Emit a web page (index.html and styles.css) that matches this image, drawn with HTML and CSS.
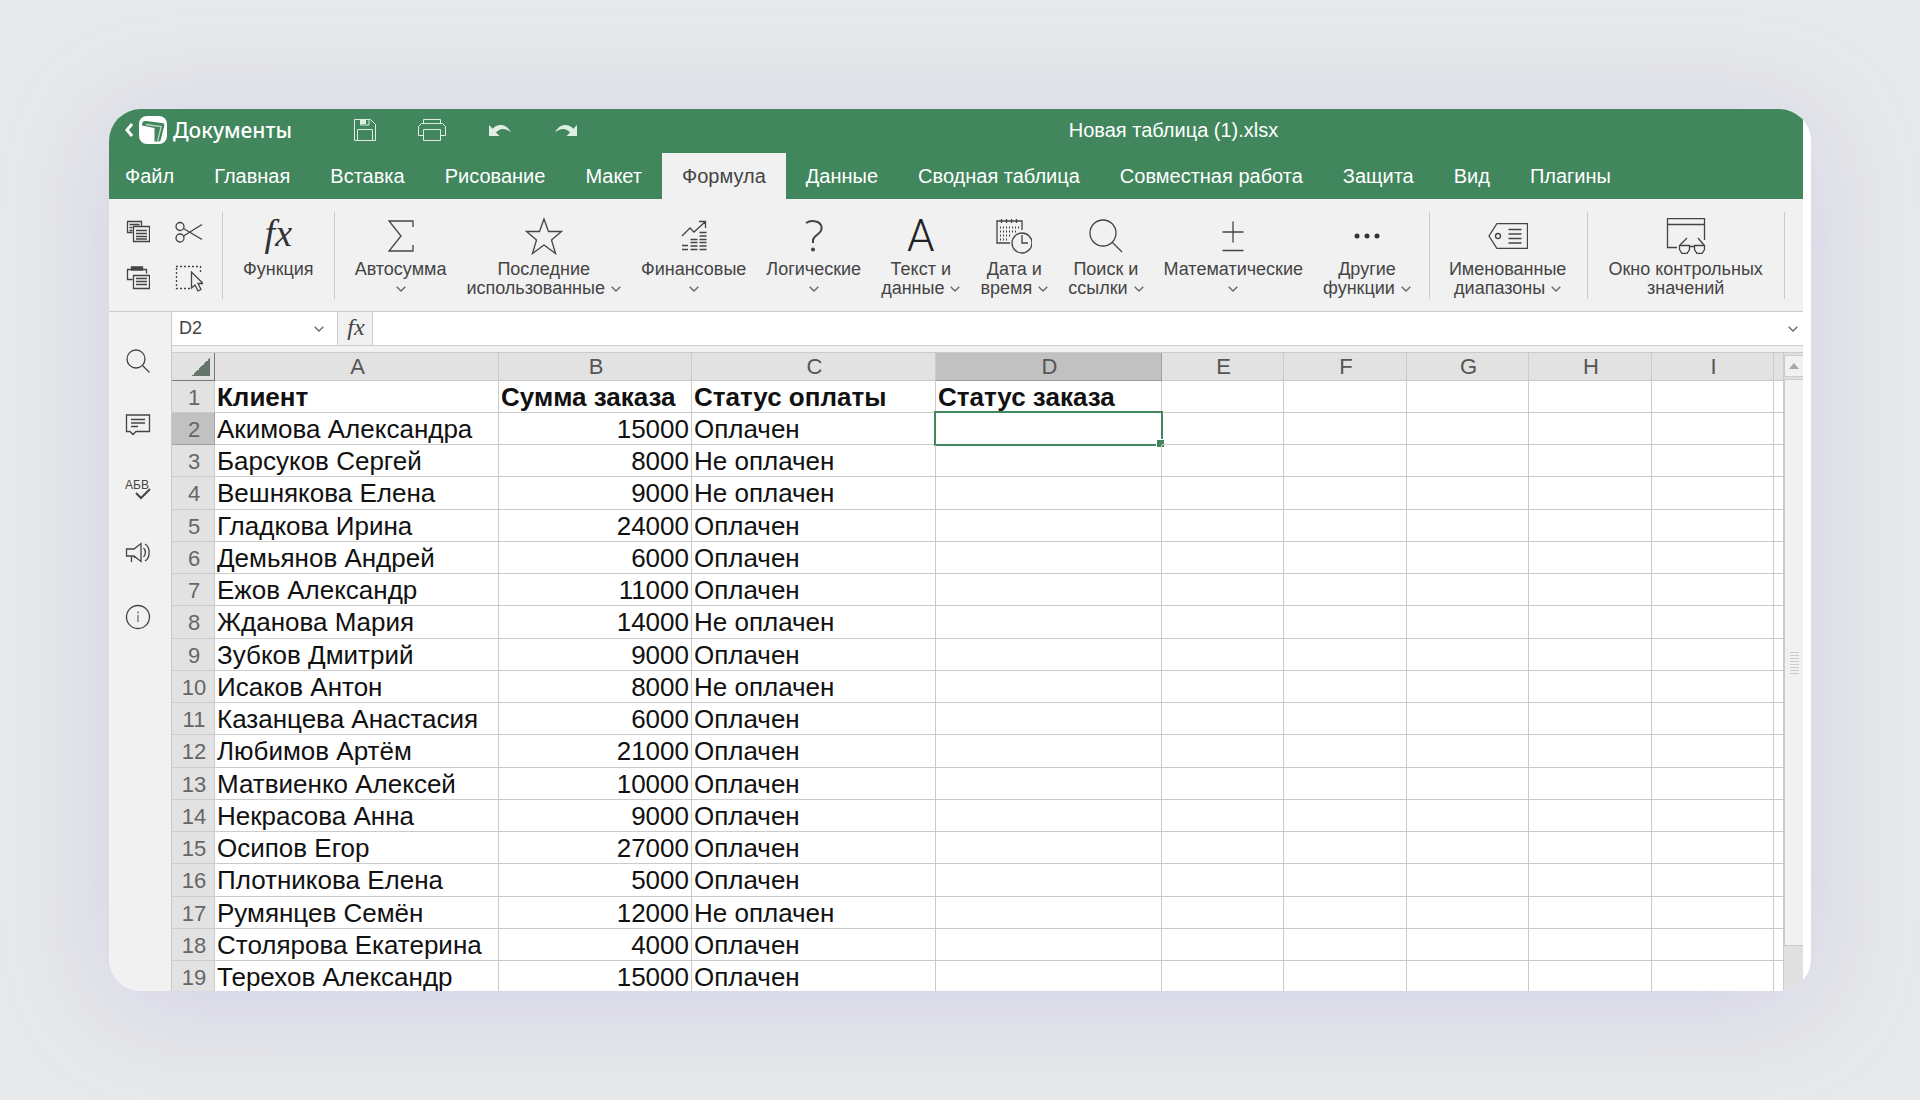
FILE: index.html
```html
<!DOCTYPE html>
<html lang="ru">
<head>
<meta charset="utf-8">
<meta name="viewport" content="width=device-width, initial-scale=1">
<title>Новая таблица (1).xlsx</title>
<link rel="stylesheet" href="styles.css">
</head>
<body>
<svg class="defs" aria-hidden="true">
  <symbol id="chev" viewBox="0 0 10 6"><path d="M.7.7 5 5 9.3.7"/></symbol>
</svg>
<main class="card">
<div class="app">
  <header class="top">
    <div class="titlebar">
      <a class="brand" href="#">
        <svg class="back" width="8" height="14" viewBox="0 0 8 14"><path d="M7 1 2 7l5 6"/></svg>
        <svg class="logo" width="28" height="28" viewBox="0 0 28 28"><rect width="28" height="28" rx="8" fill="#fff"/><path d="M3 9.500C3 6 4 4.700 7 5L23 7c2 .3 2.600 1 2.200 3L22 23c-.5 2-1 2.500-3 2.500H15.500V12z" fill="#41865c"/><path d="M18.500 25.500 22.200 10.500 7 8.500" fill="none" stroke="#b9d6c5"/></svg>
        <span>Документы</span>
      </a>
      <div class="quick">
        <button type="button" aria-label="Сохранить"><svg width="22" height="22" viewBox="0 0 22 22"><path d="M.5.5h16l5 5v16H.5zM3.500 21V10.500h15V21M6.500.5V6H15V.5"/><path d="M7 1h5v4H7z" fill="#dfeee5" stroke="none"/></svg></button>
        <button type="button" aria-label="Печать"><svg width="28" height="22" viewBox="0 0 28 22"><path d="M5.500 4.500v-4h17v4M5.500 16.500h-5v-9l3-3h21l3 3v9h-5M5.500 10.500h17v11h-17z"/></svg></button>
        <button type="button" aria-label="Отменить"><svg class="solid" width="24" height="14" viewBox="0 0 24 14"><path d="M1 2v11h10.500L8 9.600C12 4.500 18 5 23 9.500 19 .5 9 0 4.700 5.800z"/></svg></button>
        <button type="button" aria-label="Вернуть"><svg class="solid" width="24" height="14" viewBox="0 0 24 14"><path d="M23 2v11H12.500L16 9.600C12 4.500 6 5 1 9.500 5 .5 15 0 19.300 5.800z"/></svg></button>
      </div>
      <h1 class="doc">Новая таблица (1).xlsx</h1>
    </div>
    <nav class="tabs">
      <a href="#">Файл</a><a href="#">Главная</a><a href="#">Вставка</a><a href="#">Рисование</a><a href="#">Макет</a><a href="#" class="active" aria-current="page">Формула</a><a href="#">Данные</a><a href="#">Сводная таблица</a><a href="#">Совместная работа</a><a href="#">Защита</a><a href="#">Вид</a><a href="#">Плагины</a>
    </nav>
  </header>

  <div class="ribbon">
    <div class="group clip">
      <button type="button" aria-label="Копировать"><svg width="24" height="24" viewBox="0 0 24 24"><path d="M6.500 12.500h-5V1.500h14v5M3.500 4.500h10M3.500 7.500h3M3.500 10.500h3M7.500 6.500h16v15h-16zM10 10.500h11M10 13.500h11M10 16.500h11M10 19h11"/></svg></button>
      <button type="button" aria-label="Вырезать"><svg width="28" height="24" viewBox="0 0 28 24"><circle cx="5" cy="6.500" r="4"/><circle cx="5" cy="18" r="4"/><path d="m8.500 8.500 18.500 11M8.500 16 27 4.500"/></svg></button>
      <button type="button" aria-label="Вставить"><svg width="24" height="24" viewBox="0 0 24 24"><path d="M6.500 13.500h-5V3.500h4m10 0h5v4M7.500 9.500h16v13h-16zM10 12.500h11M10 15.500h11M10 18.500h11"/><path d="M5.500 1h11v3h-11z" fill="#444"/></svg></button>
      <button type="button" aria-label="Выделить"><svg width="28" height="28" viewBox="0 0 28 28"><path d="M1 2.500h24.500V10M1.500 4v20.500H15" stroke-dasharray="2 2"/><path d="M16.500 8v16l3.500-3 3 6 3-1.500-3-6h5z" fill="#f1f1f1"/></svg></button>
    </div>
    <div class="group fn">
      <button type="button" class="tool"><span class="ico fx">fx</span><span>Функция</span></button>
    </div>
    <div class="group lib">
      <button type="button" class="tool"><span class="ico"><svg width="26" height="32" viewBox="0 0 26 32"><path d="M25 7V1H1l12 15L1 31h24v-6"/></svg></span><span>Автосумма</span><svg class="chev"><use href="#chev"/></svg></button>
      <button type="button" class="tool"><span class="ico"><svg width="38" height="38" viewBox="0 0 38 38"><path d="m19 2 4.500 12.500H36.500L26.500 23l4 13.500L19 28 7.500 36.500l4-13.500-10-8.500h13z"/></svg></span><span>Последние</span><span>использованные <svg class="chev"><use href="#chev"/></svg></span></button>
      <button type="button" class="tool"><span class="ico"><svg width="26" height="32" viewBox="0 0 26 32"><path d="m1 16 8-8 4 4L24 2M18 1.500h6.500V8M1 25.500h6M1 29.500h6M9.500 19.500h7M9.500 22.500h7M9.500 26h7M9.500 29.500h7M18.500 12.500h7M18.500 16h7M18.500 19.500h7M18.500 22.500h7M18.500 26h7M18.500 29.500h7"/></svg></span><span>Финансовые</span><svg class="chev"><use href="#chev"/></svg></button>
      <button type="button" class="tool"><span class="ico"><svg width="18" height="32" viewBox="0 0 18 32"><path d="M1 3C4 1 8 .8 11 1.500c5 1 7 6 4.500 10C13 15 8.500 16.500 8 20v3" stroke-width="2"/><circle cx="8" cy="29.500" r="2" fill="#444" stroke="none"/></svg></span><span>Логические</span><svg class="chev"><use href="#chev"/></svg></button>
      <button type="button" class="tool"><span class="ico letter">A</span><span>Текст и</span><span>данные <svg class="chev"><use href="#chev"/></svg></span></button>
      <button type="button" class="tool"><span class="ico"><svg width="36" height="36" viewBox="0 0 36 36"><path d="M14 25H1V3h25v9M5.500 1v4M10.500 1v4M15.500 1v4M20.500 1v4"/><path d="M4 9.500h20M4 13.500h18M4 17.500h11M4 21.500h9" stroke-width="2" stroke-dasharray="1 2"/><circle cx="26" cy="25" r="10"/><path d="M26 17v8h6"/></svg></span><span>Дата и</span><span>время <svg class="chev"><use href="#chev"/></svg></span></button>
      <button type="button" class="tool"><span class="ico"><svg width="34" height="34" viewBox="0 0 34 34"><circle cx="14" cy="14" r="13"/><path d="m23 23 10 10"/></svg></span><span>Поиск и</span><span>ссылки <svg class="chev"><use href="#chev"/></svg></span></button>
      <button type="button" class="tool"><span class="ico"><svg width="22" height="32" viewBox="0 0 22 32"><path d="M11 1.500v21M.5 12h21M.5 30.500h21"/></svg></span><span>Математические</span><svg class="chev"><use href="#chev"/></svg></button>
      <button type="button" class="tool"><span class="ico"><svg width="26" height="6" viewBox="0 0 26 6"><g fill="#333" stroke="none"><circle cx="3" cy="3" r="2.500"/><circle cx="13" cy="3" r="2.500"/><circle cx="23" cy="3" r="2.500"/></g></svg></span><span>Другие</span><span>функции <svg class="chev"><use href="#chev"/></svg></span></button>
    </div>
    <div class="group names">
      <button type="button" class="tool"><span class="ico"><svg width="40" height="26" viewBox="0 0 40 26"><path d="M9 .5h30.500v25H9L1 13zM20.500 6.500h13M20.500 11h13M20.500 15.500h13M20.500 20h13"/><circle cx="10" cy="13" r="2.500"/></svg></span><span>Именованные</span><span>диапазоны <svg class="chev"><use href="#chev"/></svg></span></button>
    </div>
    <div class="group watch">
      <button type="button" class="tool"><span class="ico"><svg width="40" height="36" viewBox="0 0 40 36"><path d="M11 29.500H1.500V.5h37V22M1.500 6.500h37M14 27l7-7M38 27l-6-7M24 28.500h4"/><path d="M13.500 27.500h10v4l-2.500 4h-5l-2.500-4zM28.500 27.500h10v4l-2.500 4h-5l-2.500-4z"/></svg></span><span>Окно контрольных</span><span>значений</span></button>
    </div>
  </div>

  <div class="work">
    <aside class="side">
      <button type="button" aria-label="Поиск"><svg width="24" height="24" viewBox="0 0 24 24"><circle cx="10" cy="10" r="9"/><path d="m16.500 16.500 7 7"/></svg></button>
      <button type="button" aria-label="Комментарии"><svg width="26" height="22" viewBox="0 0 26 22"><path d="M1.500 1h23v16.500H11l-3 3-3-3H1.500zM6 5.500h14M6 9h14M6 12.500h7"/></svg></button>
      <button type="button" class="spell" aria-label="Орфография"><span>АБВ</span><svg width="16" height="12" viewBox="0 0 16 12"><path d="m1 5 5 5 9-9"/></svg></button>
      <button type="button" aria-label="Обратная связь"><svg width="26" height="22" viewBox="0 0 26 22"><path d="M1.500 7H9l7-5.500v18L9 14H1.500zM6.500 14v6M9.500 14v2M18.500 6c2.500 2 2.500 7 0 9M20 2c5.500 3 5.500 14 0 17"/></svg></button>
      <button type="button" aria-label="О программе"><svg width="26" height="26" viewBox="0 0 26 26"><circle cx="13" cy="13" r="11.500"/><path d="M13 11v7M13 7.500v2" stroke-width="1"/></svg></button>
    </aside>
    <div class="sheet">
      <div class="formula">
        <div class="namebox"><input type="text" value="D2" aria-label="Имя ячейки"><svg class="chev"><use href="#chev"/></svg></div>
        <button type="button" class="fxbtn" aria-label="Вставить функцию">fx</button>
        <input type="text" class="expr" aria-label="Строка формул">
        <button type="button" class="expand" aria-label="Развернуть"><svg class="chev"><use href="#chev"/></svg></button>
      </div>
      <div class="gridwrap">
        <div class="grid">
<table>
<colgroup><col class="cn"><col class="ca"><col class="cb"><col class="cc"><col class="cd"><col class="ce"><col class="cf"><col class="ce"><col class="cf"><col class="ce"><col></colgroup>
<thead><tr><th class="corner" aria-label="Выделить всё"></th><th>A</th><th>B</th><th>C</th><th class="on">D</th><th>E</th><th>F</th><th>G</th><th>H</th><th>I</th><th></th></tr></thead>
<tbody>
<tr class="head"><th>1</th><td>Клиент</td><td>Сумма заказа</td><td>Статус оплаты</td><td>Статус заказа</td><td></td><td></td><td></td><td></td><td></td><td></td></tr>
<tr><th class="on">2</th><td>Акимова Александра</td><td>15000</td><td>Оплачен</td><td class="sel"></td><td></td><td></td><td></td><td></td><td></td><td></td></tr>
<tr><th>3</th><td>Барсуков Сергей</td><td>8000</td><td>Не оплачен</td><td></td><td></td><td></td><td></td><td></td><td></td><td></td></tr>
<tr><th>4</th><td>Вешнякова Елена</td><td>9000</td><td>Не оплачен</td><td></td><td></td><td></td><td></td><td></td><td></td><td></td></tr>
<tr><th>5</th><td>Гладкова Ирина</td><td>24000</td><td>Оплачен</td><td></td><td></td><td></td><td></td><td></td><td></td><td></td></tr>
<tr><th>6</th><td>Демьянов Андрей</td><td>6000</td><td>Оплачен</td><td></td><td></td><td></td><td></td><td></td><td></td><td></td></tr>
<tr><th>7</th><td>Ежов Александр</td><td>11000</td><td>Оплачен</td><td></td><td></td><td></td><td></td><td></td><td></td><td></td></tr>
<tr><th>8</th><td>Жданова Мария</td><td>14000</td><td>Не оплачен</td><td></td><td></td><td></td><td></td><td></td><td></td><td></td></tr>
<tr><th>9</th><td>Зубков Дмитрий</td><td>9000</td><td>Оплачен</td><td></td><td></td><td></td><td></td><td></td><td></td><td></td></tr>
<tr><th>10</th><td>Исаков Антон</td><td>8000</td><td>Не оплачен</td><td></td><td></td><td></td><td></td><td></td><td></td><td></td></tr>
<tr><th>11</th><td>Казанцева Анастасия</td><td>6000</td><td>Оплачен</td><td></td><td></td><td></td><td></td><td></td><td></td><td></td></tr>
<tr><th>12</th><td>Любимов Артём</td><td>21000</td><td>Оплачен</td><td></td><td></td><td></td><td></td><td></td><td></td><td></td></tr>
<tr><th>13</th><td>Матвиенко Алексей</td><td>10000</td><td>Оплачен</td><td></td><td></td><td></td><td></td><td></td><td></td><td></td></tr>
<tr><th>14</th><td>Некрасова Анна</td><td>9000</td><td>Оплачен</td><td></td><td></td><td></td><td></td><td></td><td></td><td></td></tr>
<tr><th>15</th><td>Осипов Егор</td><td>27000</td><td>Оплачен</td><td></td><td></td><td></td><td></td><td></td><td></td><td></td></tr>
<tr><th>16</th><td>Плотникова Елена</td><td>5000</td><td>Оплачен</td><td></td><td></td><td></td><td></td><td></td><td></td><td></td></tr>
<tr><th>17</th><td>Румянцев Семён</td><td>12000</td><td>Не оплачен</td><td></td><td></td><td></td><td></td><td></td><td></td><td></td></tr>
<tr><th>18</th><td>Столярова Екатерина</td><td>4000</td><td>Оплачен</td><td></td><td></td><td></td><td></td><td></td><td></td><td></td></tr>
<tr><th>19</th><td>Терехов Александр</td><td>15000</td><td>Оплачен</td><td></td><td></td><td></td><td></td><td></td><td></td><td></td></tr>
</tbody>
</table>
        </div>
        <div class="scroll">
          <button type="button" aria-label="Прокрутить вверх"><svg width="10" height="6" viewBox="0 0 10 6"><path d="M0 6 5 0l5 6z" fill="#a8a8a8" stroke="none"/></svg></button>
          <div class="thumb"><i></i></div>
        </div>
      </div>
    </div>
  </div>
</div>
</main>
</body>
</html>
```
FILE: styles.css
```css
* { box-sizing: border-box; }
body {
  margin: 0;
  height: 100vh;
  padding: 109px;
  overflow: hidden;
  background: #e7e9ea;
  font-family: "Liberation Sans", Arial, sans-serif;
  color: #444;
}
button, input { font: inherit; color: inherit; border: 0; padding: 0; background: none; }
a { color: inherit; text-decoration: none; }
svg { display: block; fill: none; stroke: #444; stroke-width: 1.3; }
.defs { position: absolute; width: 0; height: 0; }
.chev { width: 10px; height: 6px; stroke: #666; }

.card {
  height: 100%;
  padding-right: 8px;
  overflow: hidden;
  background: #fff;
  border-radius: 32px;
  box-shadow: 0 12px 110px rgba(150, 140, 225, .28);
}
.app { display: flex; flex-direction: column; height: 100%; background: #f1f1f1; }

/* Title bar and tabs */
.top { background: #41865c; color: #fff; }
.titlebar { display: flex; align-items: center; height: 44px; padding: 0 34px 3px 16px; }
.brand { display: flex; align-items: center; gap: 6px; font: 500 21px/28px "Noto Sans", sans-serif; }
.brand .back { stroke: #fff; stroke-width: 3; }
.brand .logo { stroke: none; }
.quick { display: flex; align-items: center; gap: 42px; margin-left: 62px; }
.quick svg { stroke: #dfeee5; stroke-width: 1; }
.quick .solid { fill: #dfeee5; stroke: none; }
.doc { flex: 1; margin: 0; font-size: 20px; font-weight: 400; line-height: 24px; text-align: center; white-space: nowrap; }
.tabs { display: flex; height: 46px; font-size: 20px; line-height: 46px; white-space: nowrap; }
.tabs a { padding: 0 20px; }
.tabs a:first-child { padding-left: 16px; }
.tabs .active { background: #f1f1f1; color: #444; }

/* Ribbon */
.ribbon { display: flex; height: 113px; padding: 13px 0 12px; border-bottom: 1px solid #cbcbcb; overflow: hidden; }
.group { display: flex; flex: none; border-right: 1px solid #cbcbcb; }
.clip { display: grid; grid-template-columns: 24px 28px; gap: 20px 25px; align-content: center; align-items: center; padding: 0 19px 0 17px; }
.tool { display: flex; flex-direction: column; align-items: center; font-size: 18px; line-height: 19px; white-space: nowrap; }
.tool > span { display: flex; align-items: center; gap: 6px; }
.tool > .chev { margin-top: 7px; }
.tool > .ico { justify-content: center; height: 48px; }
.tool > .fx { padding-bottom: 6px; font: italic 38px/42px "Liberation Serif", serif; color: #333; }
.tool > .letter { font: 300 44px/48px Roboto, sans-serif; color: #222; }
.fn { padding: 0 20px; }
.lib { gap: 20px; padding: 0 18px 0 20px; }
.names { padding: 0 21px 0 19px; }
.watch { padding: 0 21px 0 20px; }

/* Side rail */
.work { display: flex; flex: 1; min-height: 0; }
.side { display: flex; flex: none; flex-direction: column; gap: 38px; width: 62px; padding: 36px 0 0 16px; }
.side button { display: flex; align-items: center; justify-content: center; width: 26px; height: 26px; }
.side .spell { flex-direction: column; align-items: flex-start; font-size: 12px; line-height: 12px; }
.spell svg { stroke-width: 2; margin: -3px 0 0 10px; }

/* Formula bar */
.sheet { display: flex; flex: 1; flex-direction: column; min-width: 0; border-left: 1px solid #cbcbcb; }
.formula { display: flex; flex: none; height: 34px; background: #fff; border-bottom: 1px solid #cbcbcb; }
.namebox { display: flex; align-items: center; width: 166px; padding: 0 13px 0 7px; border-right: 1px solid #cbcbcb; }
.namebox input { flex: 1; min-width: 0; font-size: 18px; }
.fxbtn { width: 35px; padding: 0 0 4px 2px; background: #f1f1f1; border-right: 1px solid #cbcbcb; font: italic 24px/28px "Liberation Serif", serif; }
.expr { flex: 1; min-width: 0; }
.expand { width: 20px; padding-left: 5px; }

/* Grid */
.gridwrap { display: flex; flex: 1; min-height: 0; margin-top: 6px; border-top: 1px solid #cbcbcb; }
.grid { flex: 1; min-width: 0; overflow: hidden; background: #fff; }
table { width: 100%; table-layout: fixed; border-collapse: separate; border-spacing: 0; }
.cn { width: 43px; }
.ca { width: 284px; }
.cb { width: 193px; }
.cc { width: 244px; }
.cd { width: 226px; }
.ce { width: 122px; }
.cf { width: 123px; }
th, td { height: 32px; padding: 0 3px 0 2px; border: 0 solid #cbcbcb; border-width: 0 1px 1px 0; white-space: nowrap; }
tbody tr:nth-child(4n) > * { height: 33px; }
th { padding: 1px 0 0 2px; background: #e2e2e2; font-size: 22px; font-weight: 400; line-height: 24px; text-align: center; color: #555; }
thead th { height: 28px; }
td { font-size: 26px; line-height: 30px; color: #111; position: relative; }
td:nth-child(3) { text-align: right; padding-right: 2px; }
.head td { font-weight: 700; text-align: left; }
tbody th { padding-top: 2px; color: #666; }
th.on { background: #c1c1c1; border-color: #a0a0a0; }
.corner { background: linear-gradient(135deg, transparent 50%, #66756b 50%) right 4px bottom 4px / 18px 18px no-repeat #e2e2e2; border-color: #777; }
.sel::before { content: ""; position: absolute; inset: -2px -2px -2px -2px; border: 2px solid #41865c; }
.sel::after { content: ""; position: absolute; right: -4px; bottom: -4px; width: 7px; height: 7px; background: #41865c; border: 1px solid #fff; }

/* Scrollbar */
.scroll { display: flex; flex: none; flex-direction: column; width: 19px; padding: 2px 0 45px; background: #e0e0e0; }
.scroll button { display: flex; align-items: center; justify-content: center; height: 22px; background: #f1f1f1; border: 1px solid #cbcbcb; border-right: 0; }
.thumb { display: flex; align-items: center; justify-content: center; flex: 1; margin-top: 2px; background: #f1f1f1; border: 1px solid #cbcbcb; border-right: 0; }
.thumb i { width: 9px; height: 22px; background: repeating-linear-gradient(#cbcbcb 0 1px, transparent 1px 3px); }
```
